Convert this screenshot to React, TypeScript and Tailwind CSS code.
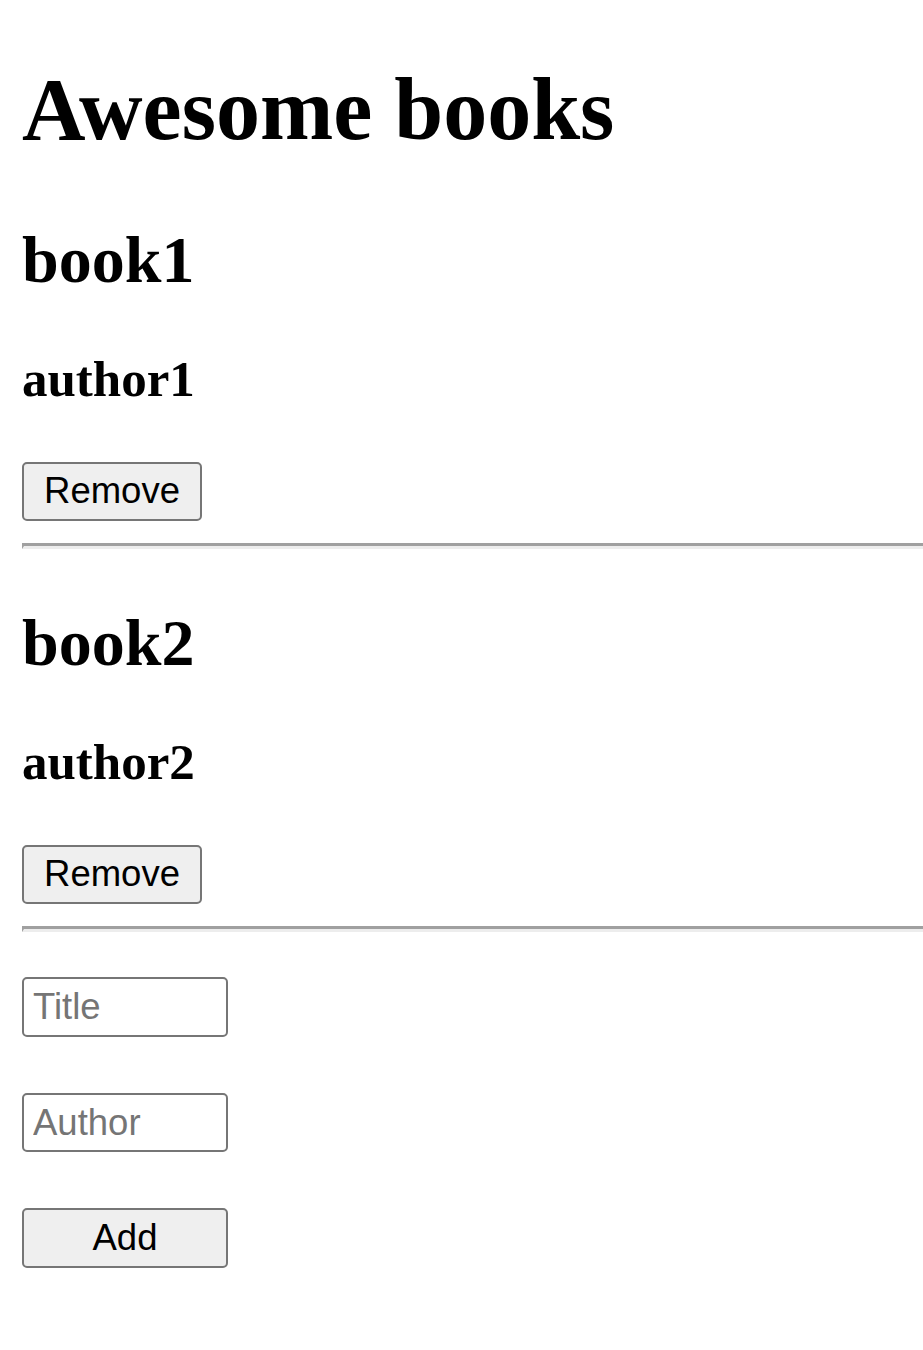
import React, { useState } from "react";

interface IBook {
  title: string;
  author: string;
}

const serif = "font-['Liberation_Serif','Times_New_Roman',serif] font-bold";
const sans = "font-['Liberation_Sans',Arial,sans-serif]";

const App = () => {
  const [books, setBooks] = useState<IBook[]>([
    { title: "book1", author: "author1" },
    { title: "book2", author: "author2" },
  ]);
  const [title, setTitle] = useState("");
  const [author, setAuthor] = useState("");

  const removeBook = (index: number) => {
    setBooks(books.filter((_, i) => i !== index));
  };

  const addBook = () => {
    if (!title || !author) return;
    setBooks([...books, { title, author }]);
    setTitle("");
    setAuthor("");
  };

  return (
    <div className="min-h-screen bg-white pl-[22px] pt-[61px] pb-[80px] text-black">
      <h1 className={`${serif} text-[88px] leading-[98px]`}>Awesome books</h1>

      <div className="mt-[64px] flex flex-col gap-[57px]">
        {books.map((book, index) => (
          <div key={index} className="flex flex-col items-start">
            <h2 className={`${serif} text-[66px] leading-[73px]`}>
              {book.title}
            </h2>
            <h3 className={`${serif} mt-[55px] text-[51px] leading-[57px]`}>
              {book.author}
            </h3>
            <button
              className={`${sans} mt-[54px] h-[59px] w-[180px] rounded-[5px] border-2 border-[#767676] bg-[#efefef] text-[36.5px] leading-none`}
              onClick={() => removeBook(index)}
            >
              Remove
            </button>
            <hr className="mt-[22px] h-0 self-stretch border-0 border-t-[3px] border-b-[3px] border-l-2 border-t-[#a0a0a0] border-b-[#ededed] border-l-[#a0a0a0]" />
          </div>
        ))}
      </div>

      <div className="mt-[45px] flex flex-col items-start gap-[56px]">
        <input
          type="text"
          placeholder="Title"
          value={title}
          onChange={(e) => setTitle(e.target.value)}
          className={`${sans} h-[60px] w-[206px] rounded-[5px] border-2 border-[#767676] px-[9px] text-[36.5px] placeholder:text-[#757575]`}
        />
        <input
          type="text"
          placeholder="Author"
          value={author}
          onChange={(e) => setAuthor(e.target.value)}
          className={`${sans} h-[59px] w-[206px] rounded-[5px] border-2 border-[#767676] px-[9px] text-[36.5px] placeholder:text-[#757575]`}
        />
        <button
          className={`${sans} h-[60px] w-[206px] rounded-[5px] border-2 border-[#767676] bg-[#efefef] text-[36.5px] leading-none`}
          onClick={addBook}
        >
          Add
        </button>
      </div>
    </div>
  );
};

export default App;
